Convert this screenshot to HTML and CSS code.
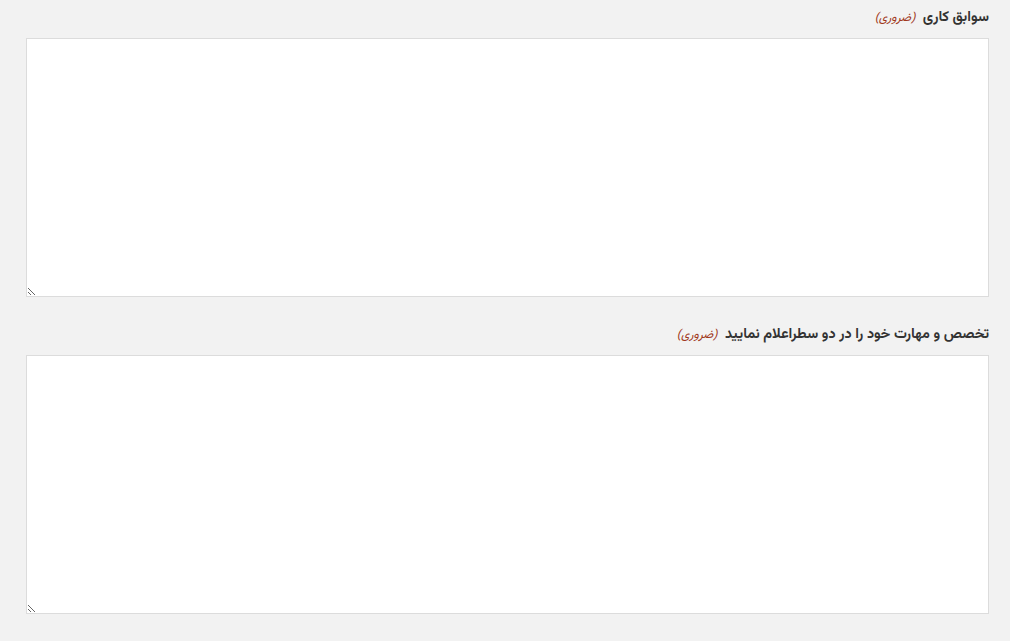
FILE: index.html
```html
<!DOCTYPE html>
<html lang="fa" dir="rtl">

<head>
    <meta charset="utf-8">
    <title>فرم</title>
    <link rel="stylesheet" href="styles.css">
</head>

<body>
    <div class="form-body">
        <div class="field">
            <label class="field-label">سوابق کاری <span class="required">(ضروری)</span></label>
            <textarea class="field-input"></textarea>
        </div>
        <div class="field">
            <label class="field-label">تخصص و مهارت خود را در دو سطراعلام نمایید <span class="required">(ضروری)</span></label>
            <textarea class="field-input"></textarea>
        </div>
    </div>
</body>

</html>
```

FILE: styles.css
```css
html,
body {
    margin: 0;
    padding: 0;
    background: #f2f2f2;
    font-family: "Vazirmatn", "Noto Sans Arabic", "DejaVu Sans", sans-serif;
}

.form-body {
    padding: 0 21px 0 26px;
}

.field {
    padding-top: 7px;
    margin-bottom: 20px;
}

.field-label {
    display: block;
    height: 22px;
    line-height: 22px;
    margin-bottom: 9px;
    font-size: 14.4px;
    font-weight: bold;
    color: #333;
}

.required {
    margin-right: 4px;
    font-size: 12px;
    font-weight: normal;
    font-style: italic;
    color: #a0381c;
}

.field-input {
    display: block;
    box-sizing: border-box;
    width: 100%;
    height: 259px;
    margin: 0;
    border: 1px solid #dcdcdc;
    background: #fff;
    resize: vertical;
}
```
